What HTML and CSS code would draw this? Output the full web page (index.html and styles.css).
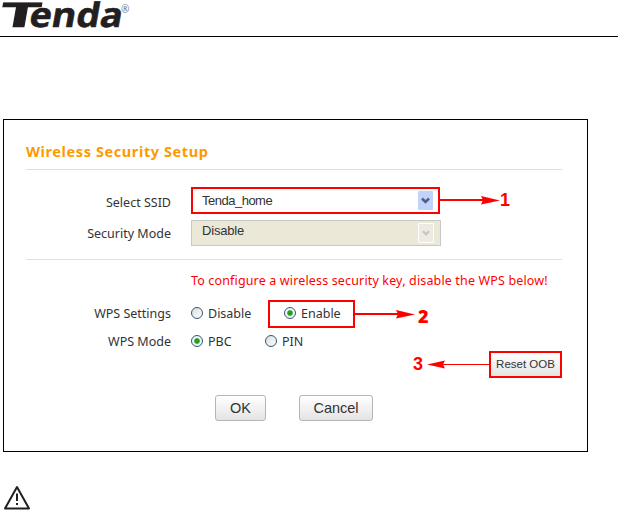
FILE: index.html
```html
<!DOCTYPE html>
<html lang="en">
<head>
    <meta charset="UTF-8">
    <meta name="viewport" content="width=device-width, initial-scale=1.0">
    <title>Wireless Security Setup</title>
    <link rel="stylesheet" href="styles.css">
</head>
<body>

<div class="header">
    <svg class="logo" width="132" height="34" viewBox="0 0 132 34">
        <g transform="translate(0 27) skewX(-10)">
            <text class="brand" x="-2" y="0" textLength="41" lengthAdjust="spacingAndGlyphs">T</text>
            <text class="brand" x="28" y="0" textLength="93" lengthAdjust="spacingAndGlyphs">enda</text>
        </g>
        <text class="mark" x="121" y="13">®</text>
    </svg>
</div>

<div class="panel">
    <h1>Wireless Security Setup</h1>

    <div class="section">
        <div class="row select-row">
            <label>Select SSID</label>
            <div class="select active">
                <span>Tenda_home</span>
                <svg class="drop" width="15" height="19" viewBox="0 0 15 19"><path d="M4 7.5l3.5 3.5L11 7.5"/></svg>
                <div class="callout one">
                    <svg width="60" height="10" viewBox="0 0 60 10"><path class="line" d="M0 4H45"/><path d="M41 0L60 4.500L41 8.500L43 4z"/></svg>
                    <b>1</b>
                </div>
            </div>
        </div>
        <div class="row select-row mode">
            <label>Security Mode</label>
            <div class="select disabled">
                <span>Disable</span>
                <svg class="drop" width="16" height="20" viewBox="0 0 16 20"><path d="M4.500 8l3.500 3.500L11.500 8"/></svg>
            </div>
        </div>
    </div>

    <p class="notice">To configure a wireless security key, disable the WPS below!</p>

    <div class="row wps-row">
        <label>WPS Settings</label>
        <div class="option"><i class="radio"></i>Disable</div>
        <div class="option boxed">
            <i class="radio checked"></i>Enable
            <div class="callout two">
                <svg width="60" height="10" viewBox="0 0 60 10"><path class="line" d="M0 4H45"/><path d="M41 0L60 4.500L41 8.500L43 4z"/></svg>
                <b>2</b>
            </div>
        </div>
    </div>
    <div class="row mode-row">
        <label>WPS Mode</label>
        <div class="option"><i class="radio checked"></i>PBC</div>
        <div class="option pin"><i class="radio"></i>PIN</div>
    </div>

    <div class="reset">
        <div class="callout three">
            <b>3</b>
            <svg width="62" height="10" viewBox="0 0 62 10"><path class="thin" d="M15 4.500H62"/><path d="M18 0.500L0 4.500L18 8.500L16 4.500z"/></svg>
        </div>
        <button class="reset-btn">Reset OOB</button>
    </div>

    <div class="buttons">
        <button class="ok">OK</button>
        <button class="cancel">Cancel</button>
    </div>
</div>

<svg class="warning" width="28" height="26" viewBox="0 0 28 26">
    <path d="M14 2L26 23.500H2z"/>
    <path d="M14 8.500V16M14 18V20"/>
</svg>

</body>
</html>
```
FILE: styles.css
```css
* {
    box-sizing: border-box;
}
body {
    margin: 0;
    background-color: white;
    color: #333;
    font-family: "Noto Sans", sans-serif;
    font-size: 12.5px;
}
.header {
    height: 37px;
    border-bottom: 1px solid #000;
}
.logo {
    display: block;
    overflow: visible;
}
.brand {
    font-family: "Open Sans", sans-serif;
    font-size: 34px;
    font-weight: 700;
    fill: #231f20;
    stroke: #231f20;
    stroke-width: 0.6;
}
.mark {
    font-size: 10px;
    fill: #777;
}
.panel {
    width: 585px;
    height: 333px;
    margin: 82px 0 0 3px;
    padding: 21px 25px 0 22px;
    border: 1px solid #000;
}
h1 {
    height: 29px;
    margin: 0;
    border-bottom: 1px solid #e0e0e0;
    color: #ff9900;
    font-size: 14.5px;
    line-height: 20px;
    letter-spacing: 0.6px;
}
.section {
    height: 90px;
    padding-top: 17px;
    border-bottom: 1px solid #e0e0e0;
}
.row {
    display: flex;
    align-items: center;
}
label {
    width: 145px;
    margin-right: 20px;
    text-align: right;
}
.select-row {
    height: 27px;
    margin-bottom: 5px;
}
.select-row label {
    padding-top: 4px;
}
.mode label {
    padding-top: 1px;
}
.select {
    position: relative;
    display: flex;
    align-items: center;
    justify-content: space-between;
    width: 250px;
    height: 27px;
    padding: 0 6px 0 10px;
    border: 1px solid #c8c8c8;
    font-family: "Liberation Sans", Arial, sans-serif;
    font-size: 13px;
    letter-spacing: -0.5px;
}
.active {
    width: 249px;
    padding: 0 5px 0 9px;
    border: 2px solid #f00;
}
.active span {
    padding-bottom: 1px;
}
.disabled {
    height: 26px;
    background-color: #ebe8d8;
}
.disabled span {
    padding-bottom: 4px;
    letter-spacing: -0.2px;
}
.drop {
    border-radius: 1px;
    background-color: #c1d3fb;
    fill: none;
    stroke: #4d6185;
    stroke-width: 2.5;
}
.disabled .drop {
    border: 1px solid #fff;
    background-color: #edebe1;
    stroke: #c6c5bb;
}
.notice {
    height: 38px;
    margin: 0;
    padding: 11px 0 0 165px;
    color: #f00;
    letter-spacing: 0.15px;
    line-height: 20px;
    white-space: nowrap;
}
.wps-row {
    height: 30px;
}
.mode-row {
    height: 26px;
}
.option {
    display: flex;
    align-items: center;
    width: 77px;
}
.boxed {
    position: relative;
    width: 87px;
    height: 28px;
    margin-top: 2px;
    padding: 0 0 2px 14px;
    border: 2px solid #f00;
}
.pin {
    margin-left: -3px;
}
.radio {
    width: 12px;
    height: 12px;
    margin-right: 5px;
    border: 1px solid #31577f;
    border-radius: 50%;
    background: linear-gradient(135deg, #dcdcd8, #fff);
}
.checked {
    background: radial-gradient(circle, #21a121 0 2.3px, #f5f5f3 3.3px);
}
.callout {
    position: absolute;
    display: flex;
    align-items: center;
    color: #f00;
    font: bold 18px "Liberation Sans", Arial, sans-serif;
    letter-spacing: 0;
}
.callout svg {
    fill: #f00;
}
.callout .line {
    stroke: #f00;
    stroke-width: 2;
}
.callout .thin {
    stroke: #f00;
    stroke-width: 1;
}
.one {
    left: 247px;
    top: 1px;
}
.two {
    left: 85px;
    top: 1px;
    gap: 3px;
    font-family: "Noto Sans", sans-serif;
    line-height: 22px;
}
.two b {
    padding-top: 2px;
}
.three {
    right: 73px;
    top: 3px;
    gap: 4px;
}
.reset {
    position: relative;
    display: flex;
    justify-content: flex-end;
    margin-top: -3px;
}
button {
    padding: 0;
    border: 1px solid #b5b5b5;
    border-radius: 3px;
    background: linear-gradient(#fff, #e4e4e4);
    color: #333;
    font-family: "Liberation Sans", Arial, sans-serif;
}
.reset-btn {
    width: 73px;
    height: 27px;
    padding-bottom: 2px;
    border: 2px solid #f00;
    border-radius: 0;
    font-size: 11.5px;
}
.buttons {
    display: flex;
    gap: 33px;
    margin: 17px 0 0 189px;
}
.buttons button {
    height: 26px;
    font-size: 14.5px;
}
.ok {
    width: 51px;
}
.cancel {
    width: 74px;
}
.warning {
    display: block;
    margin: 33px 0 0 3px;
    fill: none;
    stroke: #231f20;
    stroke-width: 2;
    stroke-linejoin: round;
}
```
